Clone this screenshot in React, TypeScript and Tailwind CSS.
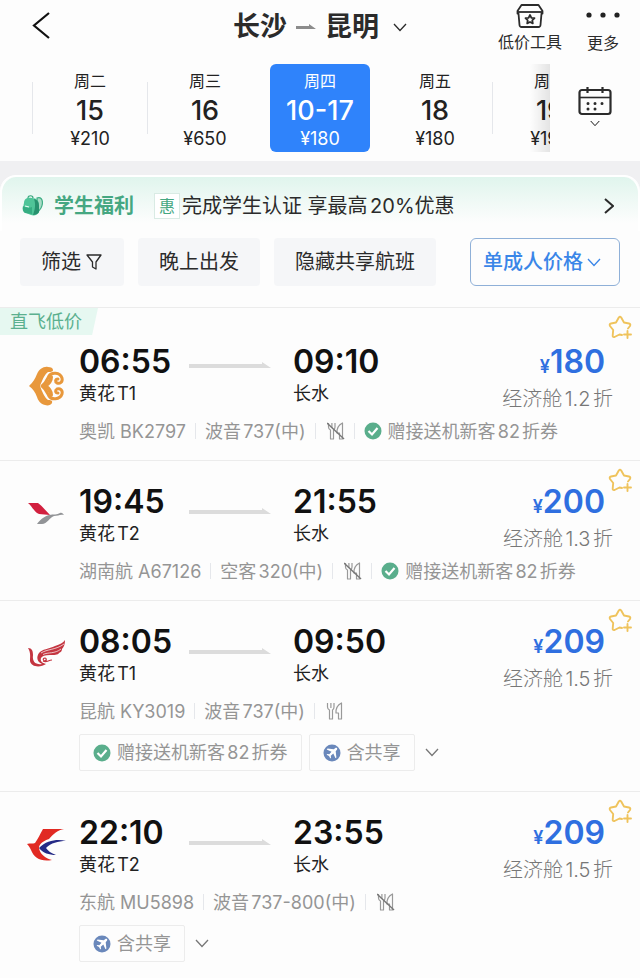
import type { ReactNode } from "react";
import clsx from "clsx";

type Flight = {
  departTime: string;
  departAirport: string;
  arriveTime: string;
  arriveAirport: string;
  flightNo: string;
  plane: string;
  meal: boolean;
  price: number;
  discount: string;
  logo: ReactNode;
  deal?: string;
  inlineCoupon?: boolean;
  chips?: ("coupon" | "share")[];
};

const days = [
  { week: "周二", date: "15", price: "¥210" },
  { week: "周三", date: "16", price: "¥650" },
  { week: "周四", date: "10-17", price: "¥180", active: true },
  { week: "周五", date: "18", price: "¥180" },
  { week: "周六", date: "19", price: "¥190" },
];

const flights: Flight[] = [
  {
    departTime: "06:55",
    departAirport: "黄花T1",
    arriveTime: "09:10",
    arriveAirport: "长水",
    flightNo: "奥凯 BK2797",
    plane: "波音737(中)",
    meal: false,
    price: 180,
    discount: "经济舱1.2折",
    logo: <OkayLogo />,
    deal: "直飞低价",
    inlineCoupon: true,
  },
  {
    departTime: "19:45",
    departAirport: "黄花T2",
    arriveTime: "21:55",
    arriveAirport: "长水",
    flightNo: "湖南航 A67126",
    plane: "空客320(中)",
    meal: false,
    price: 200,
    discount: "经济舱1.3折",
    logo: <HunanLogo />,
    inlineCoupon: true,
  },
  {
    departTime: "08:05",
    departAirport: "黄花T1",
    arriveTime: "09:50",
    arriveAirport: "长水",
    flightNo: "昆航 KY3019",
    plane: "波音737(中)",
    meal: true,
    price: 209,
    discount: "经济舱1.5折",
    logo: <KunmingLogo />,
    chips: ["coupon", "share"],
  },
  {
    departTime: "22:10",
    departAirport: "黄花T2",
    arriveTime: "23:55",
    arriveAirport: "长水",
    flightNo: "东航 MU5898",
    plane: "波音737-800(中)",
    meal: false,
    price: 209,
    discount: "经济舱1.5折",
    logo: <EasternLogo />,
    chips: ["share"],
  },
];

function OkayLogo() {
  return (
    <svg viewBox="0 0 40 40" className="size-10" aria-hidden>
      <path
        d="M2 20 C6 16 8 13 10 8 C12 3 17 0 21 1 C24 1 26 2 26 4 C26 6 23 6 21 6 C17 9 15 15 13 20 C15 25 17 31 21 34 C23 34 26 34 25 37 C24 39 21 40 18 39 C13 38 11 34 10 31 C8 26 6 23 2 20Z"
        fill="#e8983c"
      />
      <path
        d="M15 20 C19 17 20 14 22 10 C24 6 33 6 35 12 C36 16 33 18 30 17 C28 16 28 13 31 13 M15 20 C19 23 20 26 22 30 C24 34 33 34 35 28 C36 24 33 22 30 23 C28 24 28 27 31 27"
        fill="none"
        stroke="#e8983c"
        strokeWidth="3"
        strokeLinecap="round"
      />
      <path
        d="M24 11 C24 15 21 18 18 20 C21 22 24 25 24 29"
        fill="none"
        stroke="#e8983c"
        strokeWidth="4"
        strokeLinecap="round"
      />
    </svg>
  );
}

function HunanLogo() {
  return (
    <svg viewBox="0 0 40 40" className="size-10" aria-hidden>
      <path d="M1 9 L11 9 C14 11 19 17 23 21 L12 20 C7 18 5 12 1 9Z" fill="#d2203f" />
      <path
        d="M10 30 C13 26 16 23 22 21 C27 20 30 21 33 19 C35 18 36 20 37 21 C33 20 31 22 27 22 C23 23 20 30 15 30Z"
        fill="#929497"
      />
    </svg>
  );
}

function KunmingLogo() {
  return (
    <svg viewBox="0 0 40 40" className="size-10" aria-hidden>
      <path
        d="M1 14 C5 14 6 17 6 21 C5 28 9 31 15 30 C10 28 9 23 12 19 C15 15 22 15 28 12 C33 10 36 9 38 6 C38 10 37 13 35 15 C35 17 34 18 32 19 C31 21 27 21 23 21 C18 21 15 22 14 24 C13 27 15 29 19 30 C13 34 4 33 3 27 C3 23 4 19 1 14Z"
        fill="#c43540"
      />
      <path
        d="M14 19 C20 15 29 16 37 10 M16 20.500 C21 18 28 20 34 15"
        fill="none"
        stroke="#fdfdfd"
        strokeWidth="0.7"
      />
      <path
        d="M20 27 C16 28 15 24 18 24 C21 25 18 28 16 27 C20 29 21 26 25 26"
        fill="none"
        stroke="#c43540"
        strokeWidth="1.200"
      />
    </svg>
  );
}

function EasternLogo() {
  return (
    <svg viewBox="0 0 40 40" className="size-10" aria-hidden>
      <path
        d="M16 4 L37 4 C31 5 26 9 22 14 C16 16 12 19 12 23 C13 29 18 33 25 35 C14 37 7 33 4 25 C3 23 2 21 0 19 C3 18 6 19 8 18 C11 14 13 9 16 4Z"
        fill="#e12a23"
      />
      <path
        d="M39 16 C31 14 20 15 12 23 C16 28 22 30 29 30 C24 28 21 26 19 23 C24 18 31 16 39 16Z"
        fill="#242a86"
      />
    </svg>
  );
}

function Chevron({ className }: { className?: string }) {
  return (
    <svg
      viewBox="0 0 14 9"
      className={className}
      fill="none"
      stroke="currentColor"
      strokeWidth="1.3"
      aria-hidden
    >
      <path d="M1 1 L7 7.5 L13 1" />
    </svg>
  );
}

function ShopIcon() {
  return (
    <svg
      viewBox="0 0 28 24"
      className="h-6 w-7"
      fill="none"
      stroke="currentColor"
      strokeWidth="1.8"
      strokeLinejoin="round"
      aria-hidden
    >
      <path d="M5.5 1 H22.5 L26.5 7 V9.500 H25.500 L24.500 21 Q24.300 23 22.500 23 H5.500 Q3.700 23 3.500 21 L2.500 9.500 H1.500 V7Z" />
      <path d="M2 8 H26" />
      <path d="M14 11 L15.400 13.800 L18.500 14.200 L16.300 16.300 L16.800 19.400 L14 18 L11.200 19.400 L11.700 16.300 L9.500 14.200 L12.600 13.800Z" />
    </svg>
  );
}

function CalendarIcon() {
  return (
    <svg viewBox="0 0 34 30" className="h-[30px] w-[34px]" fill="none" stroke="#2b2b2b" aria-hidden>
      <rect x="1.500" y="4" width="31" height="24" rx="2.500" strokeWidth="2.200" />
      <path d="M1.500 11.500 H32.500" strokeWidth="1.600" />
      <path d="M9.500 1 V7 M24.500 1 V7" strokeWidth="2.200" />
      <path
        d="M10 17.500 h.01 M17 17.500 h.01 M24 17.500 h.01 M10 23 h.01 M17 23 h.01"
        strokeWidth="3"
        strokeLinecap="round"
      />
    </svg>
  );
}

function BackpackIcon() {
  return (
    <svg viewBox="0 0 22 22" className="size-[22px]" aria-hidden>
      <path d="M15 3 C20 1 22 7 19 13 L16 17 Z" fill="#a9dcc6" stroke="#3fae85" strokeWidth="1.200" />
      <path d="M6 3 C6 0 11 0 11 3" fill="none" stroke="#37a67e" strokeWidth="1.200" />
      <path d="M2 8 C2 3 6 2 10 3 C15 3 17 6 17 10 V17 C16 20 12 21 9 20 L4 18 C1 17 1 11 2 8Z" fill="#4fc498" />
      <path d="M12 4 C16 5 17 8 17 11 V17 C16 19 13 20 11 20 C13 15 14 9 12 4Z" fill="#27916e" />
      <path d="M1 11 C4 13 8 13 10 12 V19 L3 18 C1 17 0 14 1 11Z" fill="#35ad82" />
      <path d="M3 11 L7 12" stroke="#e9fff6" strokeWidth="1.200" />
    </svg>
  );
}

function StarIcon() {
  return (
    <svg
      viewBox="0 0 24 24"
      className="size-6"
      fill="none"
      stroke="#efc35c"
      strokeWidth="1.900"
      strokeLinecap="round"
      strokeLinejoin="round"
      aria-hidden
    >
      <path d="M14 20 L11.500 19.500 L6.500 22 Q4.500 22.500 4.700 20.500 L5.200 15 L2 11 Q1 9 3 8.500 L8 7.500 L10.800 2.500 Q12 1 13.200 2.500 L16 7.500 L21 8.500 Q23 9 22 11 L20 13.500" />
      <path d="M19.500 16 V23 M16 19.500 H23" />
    </svg>
  );
}

function MealIcon({ available }: { available: boolean }) {
  return (
    <svg
      viewBox="0 0 18 18"
      className="size-[18px]"
      fill="none"
      stroke="#999"
      strokeWidth="1.200"
      strokeLinejoin="round"
      aria-label={available ? "有餐食" : "无餐食"}
    >
      <path d="M1.500 1 V5 Q1.500 7 3.500 8 V17 H6.500 V8 Q8 7 8 5 V1 M4.900 1 V6" />
      <path d="M15.500 1 V17 H12.500 V11 H10 Q9.500 4 15.500 1Z" />
      {!available && <path d="M0 1 L17 17" stroke="#777" strokeWidth="1.400" />}
    </svg>
  );
}

function CheckIcon() {
  return (
    <svg viewBox="0 0 18 18" className="size-[18px] shrink-0" aria-hidden>
      <circle cx="9" cy="9" r="8.500" fill="#5aae8c" />
      <path d="M4.500 9 L8 12.500 L13.500 6" fill="none" stroke="#fff" strokeWidth="2.200" />
    </svg>
  );
}

function PlaneIcon() {
  return (
    <svg viewBox="0 0 18 18" className="size-[18px] shrink-0" aria-hidden>
      <circle cx="9" cy="9" r="8.500" fill="#6a88bb" />
      <path
        d="M14 4 C13 3.300 12 4 10.800 5.300 L4.500 4.600 L3.700 5.500 L8.500 7.700 L6.300 10.200 L4.300 10 L3.600 10.700 L6 12 L7.300 14.400 L8 13.700 L7.800 11.700 L10.300 9.500 L12.500 14.300 L13.400 13.500 L12.700 7.200 C14 6 14.700 5 14 4Z"
        fill="#fff"
      />
    </svg>
  );
}

function Coupon() {
  return (
    <>
      <CheckIcon />
      <span>赠接送机新客82折券</span>
    </>
  );
}

function Divider() {
  return <span className="h-4 w-px bg-gray-200" />;
}

function FlightRow({ flight }: { flight: Flight }) {
  return (
    <li
      className={clsx(
        "relative border-t border-[#ececec] pr-[27px]",
        flight.deal ? "pt-[34px]" : "pt-[21px]",
        flight.chips ? "pb-5" : "pb-[15px]",
      )}
    >
      {flight.deal && (
        <span className="absolute top-0 left-0 bg-[#e6f8f1] pr-4 pl-[10px] text-[18px] leading-[27px] text-[#5bb08f] [clip-path:polygon(0_0,100%_0,94%_100%,0_100%)]">
          {flight.deal}
        </span>
      )}
      <button type="button" aria-label="收藏" className="absolute top-[7px] right-2">
        <StarIcon />
      </button>

      <div className="flex">
        <div className={clsx("w-[79px] shrink-0 pl-[27px]", flight.deal ? "mt-6" : "mt-3")}>
          {flight.logo}
        </div>
        <div className="min-w-0 flex-1">
          <div className="flex">
            <div className="w-[110px]">
              <p className="text-[32px] leading-10 font-semibold text-[#111]">{flight.departTime}</p>
              <p className="text-[18px] leading-6 text-[#222]">{flight.departAirport}</p>
            </div>
            <svg
              viewBox="0 0 82 7"
              className={clsx("mr-[22px] h-[7px] w-[82px]", flight.deal ? "mt-5" : "mt-[26px]")}
              aria-hidden
            >
              <path d="M0 2 H73 V0 L82 6 H0Z" fill="#dcdcdc" />
            </svg>
            <div>
              <p className="text-[32px] leading-10 font-semibold text-[#111]">{flight.arriveTime}</p>
              <p className="text-[18px] leading-6 text-[#222]">{flight.arriveAirport}</p>
            </div>
            <div className="ml-auto text-right">
              <p className="mr-2 text-[32px] leading-10 font-semibold text-[#2f6fe0]">
                <span className="text-[18px] leading-none">¥</span>
                {flight.price}
              </p>
              <p className="mt-[5px] text-[20px] leading-6 font-light text-[#777]">{flight.discount}</p>
            </div>
          </div>

          <div className="mt-[6px] flex h-7 items-center gap-[9px] text-[18px] whitespace-nowrap text-[#959595]">
            <span>{flight.flightNo}</span>
            <Divider />
            <span>{flight.plane}</span>
            <Divider />
            <span className="ml-[2px]">
              <MealIcon available={flight.meal} />
            </span>
            {flight.inlineCoupon && (
              <>
                <Divider />
                <span className="flex items-center gap-[6px]">
                  <Coupon />
                </span>
              </>
            )}
          </div>

          {flight.chips && (
            <div className="mt-[9px] flex items-center gap-[7px] text-[18px] text-[#959595]">
              {flight.chips.map((chip) => (
                <span
                  key={chip}
                  className="flex h-[37px] items-center gap-[6px] rounded-xs border border-[#ececec] px-[13px]"
                >
                  {chip === "coupon" ? (
                    <Coupon />
                  ) : (
                    <>
                      <PlaneIcon />
                      <span>含共享</span>
                    </>
                  )}
                </span>
              ))}
              <button type="button" aria-label="展开" className="ml-[3px] text-[#777]">
                <Chevron className="h-[9px] w-[14px]" />
              </button>
            </div>
          )}
        </div>
      </div>
    </li>
  );
}

function Header() {
  return (
    <header className="grid h-14 grid-cols-[1fr_auto_1fr] items-start text-[#2b2b2b]">
      <button type="button" aria-label="返回" className="mt-3 ml-8 justify-self-start">
        <svg viewBox="0 0 18 27" className="h-[27px] w-[18px]" fill="none" stroke="#111" strokeWidth="2.200" aria-hidden>
          <path d="M17 1 L2 13.500 L17 26" />
        </svg>
      </button>
      <h1 className="mt-[5px] text-[27px] leading-[44px] font-bold">
        <button type="button" className="flex items-center">
          <span>长沙</span>
          <svg viewBox="0 0 20 6" className="mx-[9px] h-[6px] w-5" aria-hidden>
            <path d="M0 2 H13 V0 L20 5 H0Z" fill="#8c8c8c" />
          </svg>
          <span>昆明</span>
          <Chevron className="ml-[14px] h-[9px] w-[14px]" />
        </button>
      </h1>
      <div className="mr-5 flex gap-6 justify-self-end text-[16px] leading-6">
        <button type="button" className="flex flex-col items-center pt-1">
          <ShopIcon />
          <span className="mt-[2px]">低价工具</span>
        </button>
        <button type="button" className="flex flex-col items-center pt-1">
          <svg viewBox="0 0 34 24" className="h-6 w-[34px]" fill="#222" aria-hidden>
            <circle cx="3" cy="11" r="2.600" />
            <circle cx="17" cy="11" r="2.600" />
            <circle cx="31" cy="11" r="2.600" />
          </svg>
          <span className="mt-[3px]">更多</span>
        </button>
      </div>
    </header>
  );
}

function DateStrip() {
  return (
    <nav aria-label="日期" className="flex pt-2 pb-[9px] pl-8">
      <div className="relative flex flex-1 overflow-hidden">
        {days.map((day, i) => (
          <div key={day.date} className="flex w-[115px] shrink-0 items-center">
            <span className={clsx("h-[52px] w-px", i === 2 || i === 3 ? "bg-transparent" : "bg-gray-200")} />
            <button
              type="button"
              className={clsx(
                "mx-auto flex h-[88px] w-[100px] flex-col items-center rounded-md pt-[5px]",
                day.active ? "bg-[#2f83fb] text-white" : "text-[#222]",
              )}
            >
              <span className="text-[16px] leading-6">{day.week}</span>
              <span className="mt-[2px] text-[27px] leading-8 font-medium">{day.date}</span>
              <span className="text-[18px] leading-6">{day.price}</span>
            </button>
          </div>
        ))}
        <span className="pointer-events-none absolute inset-y-0 right-0 w-5 bg-gradient-to-l from-black/10 to-transparent" />
      </div>
      <button type="button" aria-label="日历" className="flex w-[90px] flex-col items-center pt-[22px]">
        <CalendarIcon />
        <Chevron className="mt-1 h-[7px] w-[10px]" />
      </button>
    </nav>
  );
}

function Filters() {
  const chip = "flex h-12 items-center rounded bg-[#f5f6f8] px-[21px] whitespace-nowrap";
  return (
    <div className="flex gap-[14px] px-5 pt-[7px] pb-[21px] text-[20px] text-[#2b2b2b]">
      <button type="button" className={clsx(chip, "gap-1")}>
        筛选
        <svg viewBox="0 0 18 18" className="size-[18px]" fill="none" stroke="currentColor" strokeWidth="1.300" strokeLinejoin="round" aria-hidden>
          <path d="M2 2 H16 L11 9 V16 L7.500 14 V9Z" />
        </svg>
      </button>
      <button type="button" className={chip}>
        晚上出发
      </button>
      <button type="button" className={chip}>
        隐藏共享航班
      </button>
      <button
        type="button"
        className="ml-auto flex h-12 items-center gap-1 rounded-md border border-[#8fb0d8] pr-[18px] pl-3 font-medium whitespace-nowrap text-[#3a86e8]"
      >
        单成人价格
        <Chevron className="h-[9px] w-[14px]" />
      </button>
    </div>
  );
}

export default function App() {
  return (
    <div className="min-h-screen bg-[#fdfdfd] font-['Inter','Noto_Sans_CJK_SC',sans-serif] [text-autospace:normal]">
      <Header />
      <DateStrip />

      <main className="bg-[#f0f0f2] pt-[14px]">
        <div className="rounded-t-2xl border-t-2 border-white bg-[#fdfdfd]">
          <a
            href="#student"
            className="flex h-[54px] items-center rounded-t-2xl border-x-2 border-white bg-gradient-to-b from-[#e0f5ed] to-[#fdfdfd] to-85% pt-[3px] pr-6 pl-5 text-[20px] text-[#2b2b2b]"
          >
            <BackpackIcon />
            <span className="ml-[10px] font-bold text-[#45a781]">学生福利</span>
            <span className="mr-[2px] ml-5 flex size-[26px] items-center justify-center border border-[#d9ebe4] bg-white text-[16px] text-[#45a781]">
              惠
            </span>
            <span className="whitespace-nowrap">完成学生认证 享最高20%优惠</span>
            <svg viewBox="0 0 10 16" className="ml-auto h-4 w-[10px]" fill="none" stroke="currentColor" strokeWidth="2" aria-hidden>
              <path d="M1 1 L9 8 L1 15" />
            </svg>
          </a>
          <Filters />
          <ul>
            {flights.map((flight) => (
              <FlightRow key={flight.flightNo} flight={flight} />
            ))}
          </ul>
        </div>
      </main>
    </div>
  );
}
